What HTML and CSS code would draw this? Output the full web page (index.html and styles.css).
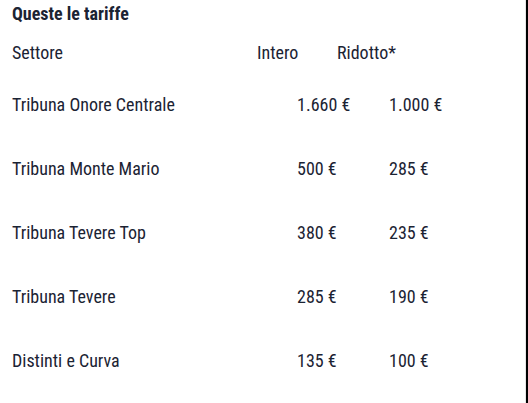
FILE: index.html
```html
<!DOCTYPE html>
<html lang="it">
<head>
<meta charset="utf-8">
<link rel="stylesheet" href="styles.css">
</head>
<body>
<div class="frame">
  <div class="content">
    <h2 class="title">Queste le tariffe</h2>
    <div class="table">
      <div class="row head">
        <div class="c1">Settore</div>
        <div class="c2">Intero</div>
        <div class="c3">Ridotto*</div>
      </div>
      <div class="row">
        <div class="c1">Tribuna Onore Centrale</div>
        <div class="c2 p">1.660 €</div>
        <div class="c3 p">1.000 €</div>
      </div>
      <div class="row">
        <div class="c1">Tribuna Monte Mario</div>
        <div class="c2 p">500 €</div>
        <div class="c3 p">285 €</div>
      </div>
      <div class="row">
        <div class="c1">Tribuna Tevere Top</div>
        <div class="c2 p">380 €</div>
        <div class="c3 p">235 €</div>
      </div>
      <div class="row">
        <div class="c1">Tribuna Tevere</div>
        <div class="c2 p">285 €</div>
        <div class="c3 p">190 €</div>
      </div>
      <div class="row">
        <div class="c1">Distinti e Curva</div>
        <div class="c2 p">135 €</div>
        <div class="c3 p">100 €</div>
      </div>
    </div>
  </div>
  <div class="edge"></div>
</div>
</body>
</html>
```
FILE: styles.css
```css
html, body {
  margin: 0;
  padding: 0;
  background: #fff;
}
body {
  width: 528px;
  height: 403px;
  overflow: hidden;
  font-family: Roboto, "Liberation Sans", sans-serif;
  font-stretch: 87.5%;
  color: #1b2333;
}
.frame {
  display: flex;
  height: 403px;
}
.content {
  flex: 1;
  padding-left: 12px;
  border-right: 1px solid #e6e6e6;
}
.edge {
  width: 2px;
  background: #000;
}
.title {
  margin: 0;
  font-size: 18px;
  font-weight: 700;
  line-height: 28px;
  height: 28px;
}
.table {
  display: flex;
  flex-direction: column;
}
.row {
  display: grid;
  grid-template-columns: 245px 80px 1fr;
  font-size: 18px;
  height: 64px;
  align-items: center;
  white-space: nowrap;
}
.row.head {
  height: 40px;
  padding-top: 4px;
}
.c2.p {
  padding-left: 40px;
}
.c3.p {
  padding-left: 52px;
}
```
